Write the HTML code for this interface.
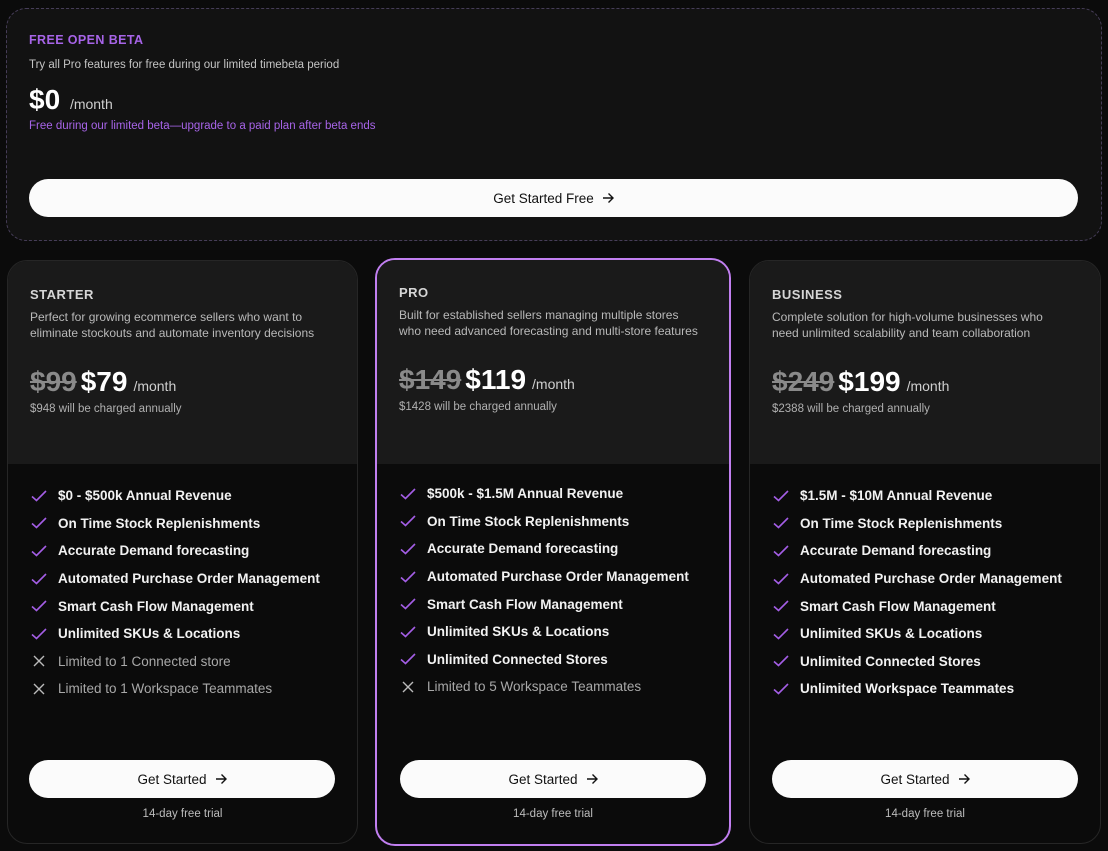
<!DOCTYPE html>
<html><head><meta charset="utf-8"><style>
*{margin:0;padding:0;box-sizing:border-box}
body{width:1108px;height:851px;background:#0b0b0b;font-family:"Liberation Sans",sans-serif;position:relative;overflow:hidden;color:#fff}
.top{position:absolute;left:6px;top:8px;width:1096px;height:233px;border:1px dashed #463d58;border-radius:20px;background:#121212}
.t{position:absolute;white-space:nowrap}
.btn{position:absolute;background:#fbfbfb;border-radius:20px;color:#111;font-size:13.5px;display:flex;align-items:center;justify-content:center;gap:8px}
.card{position:absolute;top:260px;height:584px;border:1px solid #262626;border-radius:20px;overflow:hidden;background:#0b0b0b}
.card .head{position:absolute;left:0;top:0;right:0;height:203px;background:#1a1a1a}
.name{position:absolute;left:22px;top:26px;font-size:13px;font-weight:bold;color:#d6d6d6;letter-spacing:.5px}
.desc{position:absolute;left:22px;top:48px;font-size:12px;line-height:16px;color:#b9b9b9}
.price{position:absolute;left:22px;top:105px;font-size:28px;font-weight:bold;white-space:nowrap}
.price s{color:#8a8a8a;margin-right:4px}
.price span{font-size:14px;font-weight:normal;color:#cfcfcf;margin-left:6px}
.ann{position:absolute;left:22px;top:142px;font-size:11.5px;color:#b0b0b0}
ul{position:absolute;left:22px;top:221px;list-style:none}
li{height:27.6px;font-size:13.5px;font-weight:bold;color:#f2f2f2;display:flex;align-items:center;white-space:nowrap}
li svg{width:18px;height:18px;margin-right:10px;flex:none}
li.x{font-weight:normal;color:#a8a8a8}
.trial{position:absolute;left:0;right:0;top:547px;text-align:center;font-size:11.5px;color:#bdbdbd}
</style></head><body>
<div class="top">
<div class="t" style="left:22px;top:24px;font-size:12.5px;font-weight:bold;color:#a764e8;letter-spacing:.4px">FREE OPEN BETA</div>
<div class="t" style="left:22px;top:50px;font-size:11.5px;color:#c4c4c4">Try all Pro features for free during our limited timebeta period</div>
<div class="t" style="left:22px;top:75px;font-size:28px;font-weight:bold">$0 <span style="font-size:14px;font-weight:normal;color:#cfcfcf;margin-left:2px">/month</span></div>
<div class="t" style="left:22px;top:111px;font-size:11.5px;color:#a764e8">Free during our limited beta—upgrade to a paid plan after beta ends</div>
<div class="btn" style="left:22px;top:170px;width:1049px;height:38px">Get Started Free <svg width="12" height="12" viewBox="0 0 12 12" fill="none" stroke="#111" stroke-width="1.4"><path d="M1 6h10M6.5 1.5 11 6l-4.5 4.5"/></svg></div>
</div>

<div class="card" style="left:7px;width:351px">
<div class="head"></div>
<div class="name">STARTER</div>
<div class="desc">Perfect for growing ecommerce sellers who want to<br>eliminate stockouts and automate inventory decisions</div>
<div class="price"><s>$99</s>$79<span>/month</span></div>
<div class="ann">$948 will be charged annually</div>
<ul>
<li><svg viewBox="0 0 18 18" fill="none" stroke="#a45ee6" stroke-width="1.6"><path d="M2 9.5l4.5 4L16 4"/></svg>$0 - $500k Annual Revenue</li>
<li><svg viewBox="0 0 18 18" fill="none" stroke="#a45ee6" stroke-width="1.6"><path d="M2 9.5l4.5 4L16 4"/></svg>On Time Stock Replenishments</li>
<li><svg viewBox="0 0 18 18" fill="none" stroke="#a45ee6" stroke-width="1.6"><path d="M2 9.5l4.5 4L16 4"/></svg>Accurate Demand forecasting</li>
<li><svg viewBox="0 0 18 18" fill="none" stroke="#a45ee6" stroke-width="1.6"><path d="M2 9.5l4.5 4L16 4"/></svg>Automated Purchase Order Management</li>
<li><svg viewBox="0 0 18 18" fill="none" stroke="#a45ee6" stroke-width="1.6"><path d="M2 9.5l4.5 4L16 4"/></svg>Smart Cash Flow Management</li>
<li><svg viewBox="0 0 18 18" fill="none" stroke="#a45ee6" stroke-width="1.6"><path d="M2 9.5l4.5 4L16 4"/></svg>Unlimited SKUs &amp; Locations</li>
<li class="x"><svg viewBox="0 0 18 18" fill="none" stroke="#bbb" stroke-width="1.4"><path d="M4 4l10 10M14 4L4 14"/></svg>Limited to 1 Connected store</li>
<li class="x"><svg viewBox="0 0 18 18" fill="none" stroke="#bbb" stroke-width="1.4"><path d="M4 4l10 10M14 4L4 14"/></svg>Limited to 1 Workspace Teammates</li>
</ul>
<div class="btn" style="left:21px;top:499px;width:306px;height:38px">Get Started <svg width="12" height="12" viewBox="0 0 12 12" fill="none" stroke="#111" stroke-width="1.4"><path d="M1 6h10M6.5 1.5 11 6l-4.5 4.5"/></svg></div>
<div class="trial">14-day free trial</div>
</div>

<div class="card" style="left:375px;top:258px;width:356px;height:588px;border:2px solid #c17ff0">
<div class="head" style="height:204px"></div>
<div class="name" style="top:25px">PRO</div>
<div class="desc" style="top:47px">Built for established sellers managing multiple stores<br>who need advanced forecasting and multi-store features</div>
<div class="price" style="top:104px"><s>$149</s>$119<span>/month</span></div>
<div class="ann" style="top:141px">$1428 will be charged annually</div>
<ul style="top:220px">
<li><svg viewBox="0 0 18 18" fill="none" stroke="#a45ee6" stroke-width="1.6"><path d="M2 9.5l4.5 4L16 4"/></svg>$500k - $1.5M Annual Revenue</li>
<li><svg viewBox="0 0 18 18" fill="none" stroke="#a45ee6" stroke-width="1.6"><path d="M2 9.5l4.5 4L16 4"/></svg>On Time Stock Replenishments</li>
<li><svg viewBox="0 0 18 18" fill="none" stroke="#a45ee6" stroke-width="1.6"><path d="M2 9.5l4.5 4L16 4"/></svg>Accurate Demand forecasting</li>
<li><svg viewBox="0 0 18 18" fill="none" stroke="#a45ee6" stroke-width="1.6"><path d="M2 9.5l4.5 4L16 4"/></svg>Automated Purchase Order Management</li>
<li><svg viewBox="0 0 18 18" fill="none" stroke="#a45ee6" stroke-width="1.6"><path d="M2 9.5l4.5 4L16 4"/></svg>Smart Cash Flow Management</li>
<li><svg viewBox="0 0 18 18" fill="none" stroke="#a45ee6" stroke-width="1.6"><path d="M2 9.5l4.5 4L16 4"/></svg>Unlimited SKUs &amp; Locations</li>
<li><svg viewBox="0 0 18 18" fill="none" stroke="#a45ee6" stroke-width="1.6"><path d="M2 9.5l4.5 4L16 4"/></svg>Unlimited Connected Stores</li>
<li class="x"><svg viewBox="0 0 18 18" fill="none" stroke="#bbb" stroke-width="1.4"><path d="M4 4l10 10M14 4L4 14"/></svg>Limited to 5 Workspace Teammates</li>
</ul>
<div class="btn" style="left:23px;top:500px;width:306px;height:38px">Get Started <svg width="12" height="12" viewBox="0 0 12 12" fill="none" stroke="#111" stroke-width="1.4"><path d="M1 6h10M6.5 1.5 11 6l-4.5 4.5"/></svg></div>
<div class="trial" style="top:548px">14-day free trial</div>
</div>

<div class="card" style="left:749px;width:352px">
<div class="head"></div>
<div class="name">BUSINESS</div>
<div class="desc">Complete solution for high-volume businesses who<br>need unlimited scalability and team collaboration</div>
<div class="price"><s>$249</s>$199<span>/month</span></div>
<div class="ann">$2388 will be charged annually</div>
<ul>
<li><svg viewBox="0 0 18 18" fill="none" stroke="#a45ee6" stroke-width="1.6"><path d="M2 9.5l4.5 4L16 4"/></svg>$1.5M - $10M Annual Revenue</li>
<li><svg viewBox="0 0 18 18" fill="none" stroke="#a45ee6" stroke-width="1.6"><path d="M2 9.5l4.5 4L16 4"/></svg>On Time Stock Replenishments</li>
<li><svg viewBox="0 0 18 18" fill="none" stroke="#a45ee6" stroke-width="1.6"><path d="M2 9.5l4.5 4L16 4"/></svg>Accurate Demand forecasting</li>
<li><svg viewBox="0 0 18 18" fill="none" stroke="#a45ee6" stroke-width="1.6"><path d="M2 9.5l4.5 4L16 4"/></svg>Automated Purchase Order Management</li>
<li><svg viewBox="0 0 18 18" fill="none" stroke="#a45ee6" stroke-width="1.6"><path d="M2 9.5l4.5 4L16 4"/></svg>Smart Cash Flow Management</li>
<li><svg viewBox="0 0 18 18" fill="none" stroke="#a45ee6" stroke-width="1.6"><path d="M2 9.5l4.5 4L16 4"/></svg>Unlimited SKUs &amp; Locations</li>
<li><svg viewBox="0 0 18 18" fill="none" stroke="#a45ee6" stroke-width="1.6"><path d="M2 9.5l4.5 4L16 4"/></svg>Unlimited Connected Stores</li>
<li><svg viewBox="0 0 18 18" fill="none" stroke="#a45ee6" stroke-width="1.6"><path d="M2 9.5l4.5 4L16 4"/></svg>Unlimited Workspace Teammates</li>
</ul>
<div class="btn" style="left:22px;top:499px;width:306px;height:38px">Get Started <svg width="12" height="12" viewBox="0 0 12 12" fill="none" stroke="#111" stroke-width="1.4"><path d="M1 6h10M6.5 1.5 11 6l-4.5 4.5"/></svg></div>
<div class="trial">14-day free trial</div>
</div>
</body></html>
